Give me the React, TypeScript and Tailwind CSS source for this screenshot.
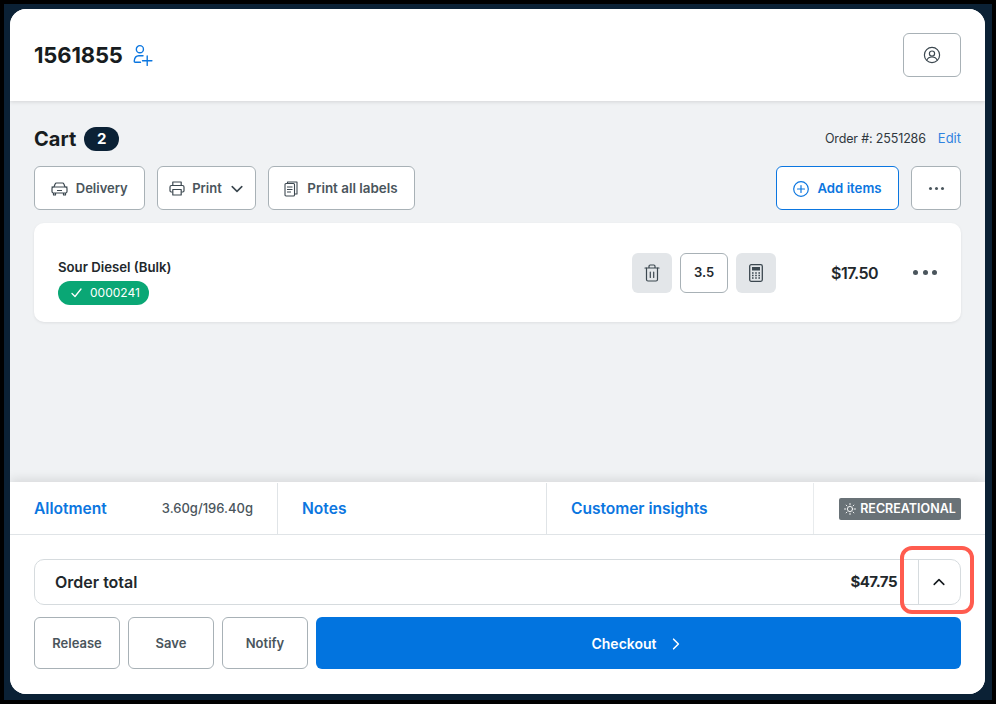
const font = "font-['Inter','Liberation_Sans',sans-serif]";

function UserPlusIcon() {
  return (
    <svg width="23" height="23" viewBox="0 0 22 22" fill="none" stroke="#0b76e0" strokeWidth="1.300" strokeLinecap="round">
      <circle cx="8.500" cy="5" r="3.400" />
      <path d="M11.500 11.200H7.500c-2.600 0-4.200 2-4.400 5.200-.05.8.3 1.100 1 1.100h5" />
      <path d="M15.500 11.500v9M11 16h9" />
    </svg>
  );
}

function ProfileIcon() {
  return (
    <svg width="18" height="18" viewBox="0 0 18 18" fill="none" stroke="#3c4850" strokeWidth="1.200">
      <circle cx="9" cy="9" r="7.600" />
      <circle cx="9" cy="7.600" r="2.600" />
      <path d="M3.900 14c.8-2 2.600-3 5.100-3s4.300 1 5.100 3" />
    </svg>
  );
}

function CarIcon() {
  return (
    <svg width="17" height="14" viewBox="0 0 17 14" fill="none" stroke="#3c4850" strokeWidth="1.200" strokeLinejoin="round">
      <path d="M3 5l1.100-3c.2-.6.7-1 1.400-1h6c.7 0 1.200.4 1.400 1L14 5" />
      <rect x="1" y="5" width="15" height="6" rx="1.500" />
      <path d="M2.500 11v2h2v-2M12.500 11v2h2v-2M6 8.500h5" />
      <path d="M0.500 5h2M14.500 5h2" />
    </svg>
  );
}

function PrinterIcon() {
  return (
    <svg width="16" height="15" viewBox="0 0 16 15" fill="none" stroke="#3c4850" strokeWidth="1.200" strokeLinejoin="round">
      <path d="M3.800 4.500V1h8.400v3.500" />
      <path d="M3.500 11H2.200C1.500 11 1 10.500 1 9.800V6c0-.8.600-1.500 1.500-1.500h11c.9 0 1.500.7 1.500 1.500v3.800c0 .7-.5 1.200-1.200 1.200h-1.300" />
      <rect x="3.800" y="8.500" width="8.400" height="5.500" />
    </svg>
  );
}

function LabelsIcon() {
  return (
    <svg width="14" height="16" viewBox="0 0 14 16" fill="none" stroke="#3c4850" strokeWidth="1.100" strokeLinejoin="round">
      <rect x="1" y="2.500" width="9.500" height="12.500" rx="1" />
      <path d="M3.500 2.500V1H13v12h-2.500" />
      <path d="M3 6h5.500M3 8.500h5.500M3 11h4" />
    </svg>
  );
}

function TrashIcon() {
  return (
    <svg width="16" height="18" viewBox="0 0 16 18" fill="none" stroke="#3c4850" strokeWidth="1.200" strokeLinecap="round" strokeLinejoin="round">
      <path d="M1 4h14M5 4V2.200C5 1.500 5.500 1 6.200 1h3.600c.7 0 1.200.5 1.200 1.200V4" />
      <path d="M2.500 4v11.500c0 .8.600 1.500 1.500 1.500h8c.9 0 1.500-.7 1.500-1.500V4" />
      <path d="M6.300 8v5.500M9.700 8v5.500" />
    </svg>
  );
}

function CalculatorIcon() {
  return (
    <svg width="14" height="18" viewBox="0 0 14 18" fill="none">
      <rect x="0.700" y="0.700" width="12.600" height="16.600" rx="1.500" stroke="#3c4850" strokeWidth="1.300" />
      <rect x="3" y="3" width="8" height="3.500" fill="#3c4850" />
      <path d="M3 9h1.600M6.200 9h1.600M9.400 9H11M3 11.500h1.600M6.200 11.500h1.600M9.400 11.500H11M3 14h1.600M6.200 14h1.600M9.400 14H11" stroke="#3c4850" strokeWidth="1.300" />
    </svg>
  );
}

function SunIcon() {
  return (
    <svg width="12" height="12" viewBox="0 0 12 12" fill="none" stroke="#fff" strokeWidth="0.900" strokeLinecap="round">
      <circle cx="6" cy="6" r="2.600" />
      <path d="M6 .5v1.300M6 10.200v1.300M.5 6h1.300M10.200 6h1.300M2.100 2.100l.9.9M9 9l.9.9M2.100 9.900L3 9M9 3l.9-.9" />
    </svg>
  );
}

function Chevron({ dir, color, size = 10 }: { dir: 'up' | 'down' | 'right'; color: string; size?: number }) {
  const d = dir === 'up' ? 'M1 7l4-4 4 4' : dir === 'down' ? 'M1 3l4 4 4-4' : 'M3 1l4 4-4 4';
  return (
    <svg width={size} height={size} viewBox="0 0 10 10" fill="none" stroke={color} strokeWidth="1.300" strokeLinecap="round" strokeLinejoin="round">
      <path d={d} />
    </svg>
  );
}

function Dots({ gap, size, color }: { gap: string; size: string; color: string }) {
  return (
    <div className={`flex ${gap}`}>
      <span className={`${size} rounded-full ${color}`} />
      <span className={`${size} rounded-full ${color}`} />
      <span className={`${size} rounded-full ${color}`} />
    </div>
  );
}

const outlineBtn = 'h-11 pt-px flex items-center justify-center rounded-[6px] border border-[#a8b1b6] bg-white text-[13px] font-semibold text-[#4a555c]';

export default function App() {
  return (
    <div className={`${font} w-[996px] h-[704px] border-4 border-black bg-[#0b2135] pt-[5px] pl-[6px] pr-[7px] pb-[6px] relative overflow-hidden`}>
      <div className="h-[685px] rounded-[16px] overflow-hidden bg-[#f0f2f4] flex flex-col">
        <div className="h-[92px] shrink-0 bg-white flex items-center justify-between pl-6 pr-6 shadow-[0_1px_4px_rgba(0,0,0,0.12)] relative">
          <div className="flex items-center gap-[8px]">
            <span className="text-[22px] font-bold text-[#171c20] tracking-[-0.15px]">1561855</span>
            <UserPlusIcon />
          </div>
          <button className="w-[58px] h-11 flex items-center justify-center rounded-[6px] border border-[#a8b1b6] bg-white">
            <ProfileIcon />
          </button>
        </div>

        <div className="flex-1 px-6 pt-[24px] min-h-0">
          <div className="flex items-center justify-between h-7">
            <div className="flex items-center gap-2">
              <span className="text-[20px] font-bold text-[#171c20]">Cart</span>
              <span className="w-[35px] h-6 rounded-full bg-[#0b2135] text-white text-[15px] font-bold flex items-center justify-center">2</span>
            </div>
            <div className="flex items-center gap-3 text-[13px]">
              <span className="text-[#2f383e] text-[12.5px] tracking-[-0.15px]">Order #: 2551286</span>
              <span className="text-[#2f83e0]">Edit</span>
            </div>
          </div>

          <div className="flex items-center justify-between mt-[13px]">
            <div className="flex gap-3">
              <button className={`${outlineBtn} w-[110.5px] gap-2`}><CarIcon />Delivery</button>
              <button className={`${outlineBtn} w-[99px] gap-[7px]`}><PrinterIcon />Print<span className="ml-[2px]"><Chevron dir="down" color="#3c4850" size={12} /></span></button>
              <button className={`${outlineBtn} w-[147px] gap-[9px]`}><LabelsIcon /><span className="text-[13.4px]">Print all labels</span></button>
            </div>
            <div className="flex gap-3">
              <button className="w-[123px] h-11 pt-px flex items-center justify-center gap-2 rounded-[6px] border border-[#0b76e0] bg-white text-[13.2px] font-semibold text-[#0b76e0]">
                <svg width="16" height="16" viewBox="0 0 16 16" fill="none" stroke="#0b76e0" strokeWidth="1.200" strokeLinecap="round">
                  <circle cx="8" cy="8" r="7.300" /><path d="M8 4.500v7M4.500 8h7" />
                </svg>
                Add items
              </button>
              <button className="w-[50px] h-11 flex items-center justify-center rounded-[6px] border border-[#a8b1b6] bg-white">
                <Dots gap="gap-[3px]" size="w-[3px] h-[3px]" color="bg-[#4a555c]" />
              </button>
            </div>
          </div>

          <div className="mt-[13px] h-[99px] rounded-[10px] bg-white shadow-[0_1px_3px_rgba(0,0,0,0.08)] flex items-center pl-6 pr-6">
            <div className="flex-1 flex flex-col gap-[3px] pt-[18px]">
              <span className="text-[13.2px] font-semibold text-[#22282c]">Sour Diesel (Bulk)</span>
              <span className="w-[91px] h-6 rounded-full bg-[#0aa775] flex items-center pl-[13px] gap-[8px] text-[12px] text-white">
                <svg width="11" height="10" viewBox="0 0 11 10" fill="none" stroke="#fff" strokeWidth="1.300" strokeLinecap="round" strokeLinejoin="round"><path d="M1 5.500L4 8.500 10 1" /></svg>
                0000241
              </span>
            </div>
            <div className="flex items-center gap-2">
              <button className="w-10 h-10 rounded-[6px] bg-[#e3e6e9] flex items-center justify-center"><TrashIcon /></button>
              <div className="w-12 h-10 rounded-[6px] border border-[#a8b1b6] bg-white flex items-center justify-center text-[13px] font-semibold text-[#22282c]">3.5</div>
              <button className="w-10 h-10 rounded-[6px] bg-[#e3e6e9] flex items-center justify-center"><CalculatorIcon /></button>
            </div>
            <span className="w-[102px] text-right text-[16px] font-semibold text-[#22282c] tracking-[-0.5px]">$17.50</span>
            <div className="ml-[35px]">
              <Dots gap="gap-[4.5px]" size="w-[5px] h-[5px]" color="bg-[#4a555c]" />
            </div>
          </div>
        </div>

        <div className="shrink-0 h-[212px] bg-white flex flex-col relative shadow-[0_-3px_10px_rgba(0,0,0,0.1)]">
          <div className="h-[53px] pt-px flex border-b border-[#e0e4e7]">
            <div className="w-[268px] pl-6 pr-6 flex items-center justify-between border-r border-[#e0e4e7]">
              <span className="text-[15.6px] font-semibold text-[#0b76e0]">Allotment</span>
              <span className="text-[13px] font-medium text-[#4a555c]">3.60g/196.40g</span>
            </div>
            <div className="w-[269px] pl-6 flex items-center border-r border-[#e0e4e7]">
              <span className="text-[15.6px] font-semibold text-[#0b76e0]">Notes</span>
            </div>
            <div className="w-[267px] pl-6 flex items-center border-r border-[#e8ebed]">
              <span className="text-[15.6px] font-semibold text-[#0b76e0] tracking-[-0.05px]">Customer insights</span>
            </div>
            <div className="flex-1 flex items-center pl-[25px]">
              <span className="w-[122px] h-[22px] rounded-[2px] bg-[#697277] flex items-center justify-center gap-[4px] text-[12.5px] font-semibold text-white">
                <SunIcon /><span className="pt-px">RECREATIONAL</span>
              </span>
            </div>
          </div>

          <div className="flex-1 px-6 pt-6">
            <div className="h-[46px] flex items-center rounded-[10px] border border-[#d6dbde] pl-5">
              <span className="flex-1 text-[16px] font-semibold text-[#22282c]">Order total</span>
              <span className="text-[15px] font-bold text-[#22282c] tracking-[-0.5px] mr-[21px]">$47.75</span>
              <div className="w-[42px] h-full pr-[2px] border-l border-[#d6dbde] flex items-center justify-center">
                <Chevron dir="up" color="#171c20" size={12} />
              </div>
            </div>
            <div className="flex gap-2 mt-3">
              <button className={`${outlineBtn} w-[86px] h-[52px]`}>Release</button>
              <button className={`${outlineBtn} w-[86px] h-[52px]`}>Save</button>
              <button className={`${outlineBtn} w-[86px] h-[52px]`}>Notify</button>
              <button className="flex-1 h-[52px] pt-px pr-[4px] rounded-[6px] bg-[#0274df] flex items-center justify-center gap-[13px] text-[14px] font-semibold text-white">
                Checkout <Chevron dir="right" color="#fff" size={12} />
              </button>
            </div>
          </div>
        </div>
      </div>
      <div className="absolute left-[896px] top-[542px] w-[74px] h-[68px] rounded-[12px] border-4 border-[#ff5c4f]" />
    </div>
  );
}
